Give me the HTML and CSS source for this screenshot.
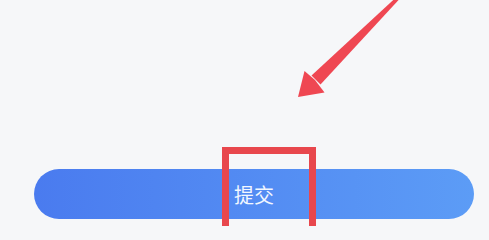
FILE: index.html
```html
<!DOCTYPE html>
<html lang="zh">
<head>
<meta charset="utf-8">
<link rel="stylesheet" href="styles.css">
</head>
<body>
<main class="page">
  <button class="submit">提交</button>
</main>
<svg class="arrow" width="489" height="226" viewBox="0 0 489 226">
  <polygon points="399.5,-1 396.5,-3 311.5,75.5 320.5,84.5" fill="#ef4752"/>
  <polygon points="298,97 304.5,71 315,80 324.5,92.5" fill="#ef4752"/>
</svg>
<div class="highlight"></div>
</body>
</html>
```

FILE: styles.css
```css
html, body {
  margin: 0;
  padding: 0;
}
body {
  width: 489px;
  height: 226px;
  overflow: hidden;
  background: #f6f7f9;
  font-family: "Noto Sans CJK SC", "Noto Sans", sans-serif;
  position: relative;
}
.page {
  display: flex;
  flex-direction: column;
  padding: 169px 15px 0 34px;
}
.submit {
  height: 50px;
  border: none;
  border-radius: 25px;
  background: linear-gradient(to right, #4a7bef, #5c9cf6);
  color: #f2f7ff;
  font-family: "Noto Sans CJK SC", "Noto Sans", sans-serif;
  font-size: 20px;
  padding: 0;
  display: flex;
  align-items: center;
  justify-content: center;
}
.arrow {
  position: absolute;
  left: 0;
  top: 0;
}
.highlight {
  position: absolute;
  left: 222px;
  top: 147px;
  width: 80px;
  height: 90px;
  border: 7px solid #e8474d;
}
```
